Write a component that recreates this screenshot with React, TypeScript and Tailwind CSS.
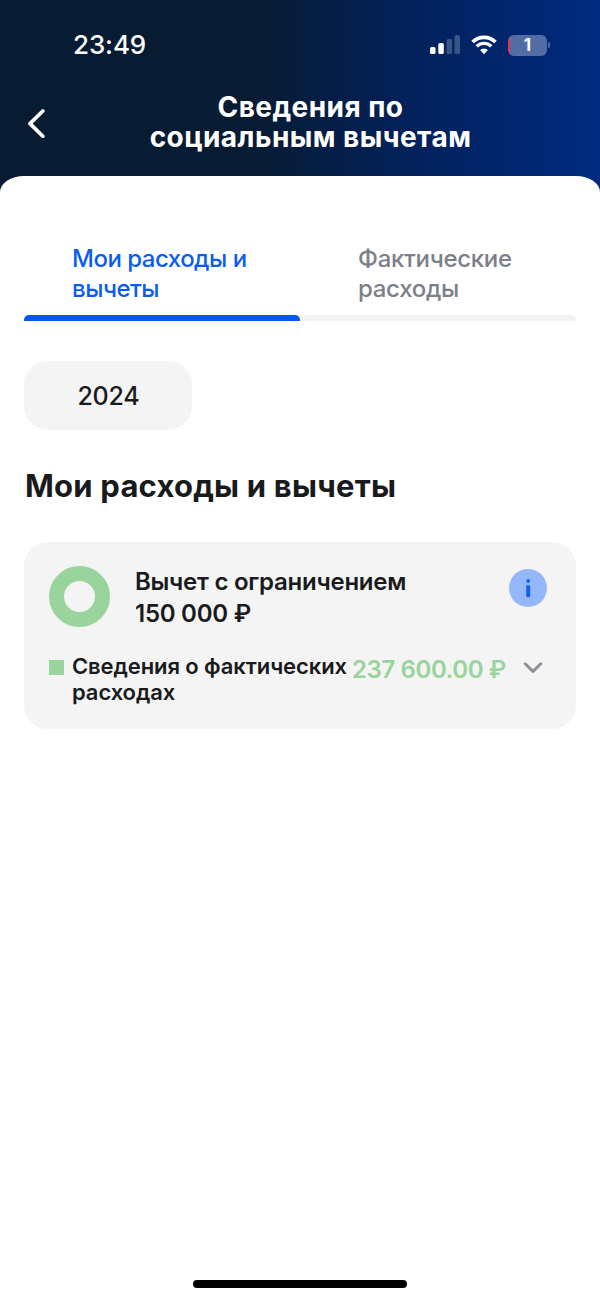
import type { ReactNode } from "react";

function StatusBar() {
  return (
    <div className="flex h-[90px] items-center pl-[73px] pr-[50px]">
      <span className="text-[26px] leading-8 font-medium tracking-[-0.1px]">23:49</span>
      <div className="ml-auto flex items-center">
        {/* Cellular signal */}
        <svg className="h-5 w-[30px]" viewBox="0 0 30 20" fill="white">
          <rect x="0" y="12" width="5.5" height="7" rx="1.6" />
          <rect x="8.3" y="8" width="5.5" height="11" rx="1.6" />
          <rect x="16.6" y="4" width="5.5" height="15" rx="1.6" opacity="0.22" />
          <rect x="24.5" y="0" width="5.5" height="19" rx="1.6" opacity="0.22" />
        </svg>
        {/* Wi-Fi */}
        <svg className="ml-[11px] h-5 w-[26px]" viewBox="0 0 26 20" fill="none">
          <path d="M1.6 7a16.2 16.2 0 0 1 22.8 0" stroke="white" strokeWidth="3.8" />
          <path d="M5.8 11.4a10.2 10.2 0 0 1 14.4 0" stroke="white" strokeWidth="3.4" />
          <path d="M13 19.2l-3.9-4.1a5.6 5.6 0 0 1 7.8 0z" fill="white" />
        </svg>
        {/* Battery */}
        <div className="ml-[11px] flex h-[21px] w-[39px] items-center justify-center overflow-hidden rounded-[6px] bg-[linear-gradient(90deg,#d93a50_2px,#536ca3_2px)] text-[17px] leading-none font-bold">
          1
        </div>
        <div className="ml-[1px] h-[6px] w-[2px] rounded-r-full bg-[#536ca3]" />
      </div>
    </div>
  );
}

function Tab({ active = false, children }: { active?: boolean; children: ReactNode }) {
  return (
    <div
      className={
        active
          ? "h-[71px] w-1/2 pl-12 tracking-[-0.5px] text-[#0b5cf0]"
          : "h-[71px] w-1/2 pl-[58px] tracking-[-0.3px] text-[#7c8088]"
      }
    >
      {children}
    </div>
  );
}

export default function App() {
  return (
    <div className="flex h-[1300px] w-[600px] flex-col bg-[linear-gradient(90deg,#071b33_0%,#071b33_42%,#03215a_67%,#002b80_100%)] font-['Inter',sans-serif] text-white">
      <StatusBar />

      {/* Header */}
      <div className="flex h-[86px] pl-[27px]">
        <svg className="mt-[18px] h-[30px] w-[18px]" viewBox="0 0 18 30" fill="none">
          <path d="M15.8 3L3 15.6L15.8 28.2" stroke="white" strokeWidth="3.7" strokeLinecap="round" strokeLinejoin="round" />
        </svg>
        <h1 className="ml-[90px] mt-[2px] w-[351px] text-center text-[28px] leading-[30px] font-bold tracking-[0.45px]">
          Сведения по
          <br />
          социальным вычетам
        </h1>
      </div>

      <main className="flex flex-1 flex-col rounded-tl-[24px_16px] rounded-tr-[24px_16px] bg-white px-6 pt-[68px] text-[#191a1c]">
        {/* Tabs */}
        <div className="flex text-[24px] leading-[30px] font-medium">
          <Tab active>
            Мои расходы и
            <br />
            вычеты
          </Tab>
          <Tab>
            Фактические
            <br />
            расходы
          </Tab>
        </div>
        <div className="h-1.5 rounded-t-[5px] bg-[#f3f3f3]">
          <div className="h-full w-1/2 rounded-t-[5px] bg-[#0358ef]" />
        </div>

        <button className="mt-10 h-[69px] w-[168px] rounded-[24px] bg-[#f4f4f4] pl-px pt-0.5 text-[25px] font-medium tracking-[-0.2px]">
          2024
        </button>

        <h2 className="mt-9 pl-px text-[31px] leading-10 font-bold tracking-[0.2px]">Мои расходы и вычеты</h2>

        {/* Deduction card */}
        <section className="mt-9 h-[187px] rounded-[24px] bg-[#f4f4f4] pl-[25px] pt-6">
          <div className="flex h-[87px]">
            <div className="size-[61px] rounded-full border-[15px] border-[#98d49b]" />
            <div className="ml-[25px] w-[374px] text-[24px] leading-8 font-semibold tracking-[-0.25px]">
              Вычет с ограничением
              <br />
              150 000 ₽
            </div>
            <svg className="mt-[3px] size-[38px]" viewBox="0 0 38 38">
              <circle cx="19" cy="19" r="19" fill="#94b6fa" />
              <circle cx="19.2" cy="12" r="1.9" fill="#1460f2" />
              <rect x="17.2" y="16.2" width="4" height="12" rx="1.2" fill="#1460f2" />
            </svg>
          </div>
          <div className="flex">
            <div className="mt-[7px] size-[15px] bg-[#98d49b]" />
            <div className="ml-2 w-[280px] text-[22px] leading-[26px] font-semibold tracking-[-0.1px] whitespace-nowrap">
              Сведения о фактических
              <br />
              расходах
            </div>
            <div className="w-[155px] pt-px text-[24px] leading-8 font-semibold tracking-[-0.4px] whitespace-nowrap text-[#98d49b]">
              237 600.00 ₽
            </div>
            <svg className="ml-4 mt-[9px] h-3 w-[20px]" viewBox="0 0 20 12" fill="none">
              <path d="M2.2 1.8L10 9.4L17.8 1.8" stroke="#8f9096" strokeWidth="3" strokeLinecap="round" strokeLinejoin="round" />
            </svg>
          </div>
        </section>

        {/* Home indicator */}
        <div className="mx-auto mb-3 mt-auto h-2 w-[214px] rounded-full bg-black" />
      </main>
    </div>
  );
}
